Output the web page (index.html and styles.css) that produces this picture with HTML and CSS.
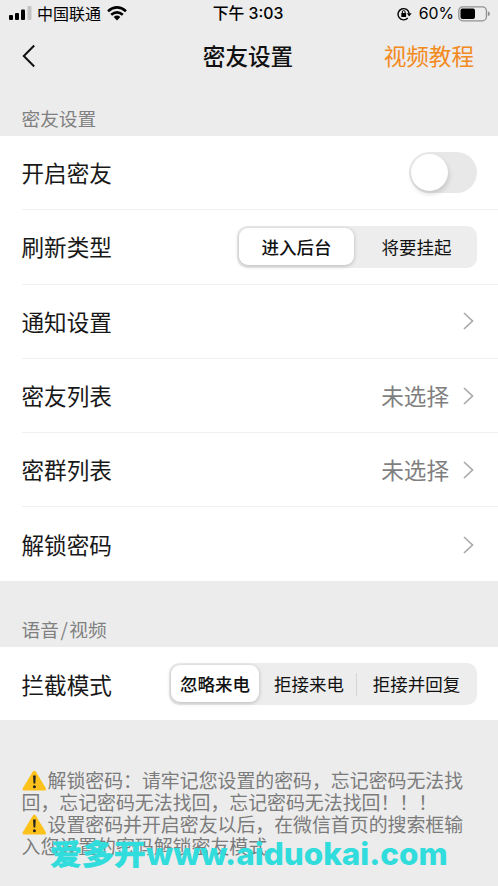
FILE: index.html
```html
<!DOCTYPE html>
<html lang="zh-CN">
<head>
<meta charset="utf-8">
<title>密友设置</title>
<link rel="stylesheet" href="styles.css">
</head>
<body>
<header class="status">
  <div class="status-left">
    <svg class="signal" width="24" height="14" viewBox="0 0 24 14"><rect x="0" y="9" width="4" height="5" rx="1"/><rect x="6" y="7" width="4" height="7" rx="1"/><rect x="12" y="3.500" width="4" height="10.500" rx="1"/><rect x="18.500" y="0" width="4" height="14" rx="1" fill="#c3c3c3"/></svg>
    <span class="carrier">中国联通</span>
    <svg class="wifi" width="20" height="15" viewBox="0 0 20 15"><g fill="none" stroke="#000" stroke-width="2.600"><path d="M1 5.200Q10-2.400 19 5.200"/><path d="M4.200 8.800Q10 3.800 15.800 8.800"/></g><path d="M6.700 11Q10 8.200 13.300 11L10 14.600Z"/></svg>
  </div>
  <div class="clock">下午 3:03</div>
  <div class="status-right">
    <svg width="15" height="14" viewBox="0 0 15 14"><g fill="none" stroke="#000" stroke-width="1.400"><path d="M10.800 11A5.600 5.600 0 1 1 12.200 6.500"/><path d="M5.300 6.500V5Q5.300 3.600 6.700 3.600Q8.100 3.600 8.100 5V6.500" stroke-width="1"/></g><rect x="4.300" y="6" width="4.800" height="4" rx=".6"/><path d="M9.800 6.200h4.800l-2.400 3.200z"/></svg>
    <span class="percent">60%</span>
    <svg width="33" height="16" viewBox="0 0 33 16"><rect x=".8" y=".8" width="27.600" height="14" rx="4" fill="none" stroke="#929292" stroke-width="1.300"/><rect x="2.500" y="2.600" width="14.500" height="10.400" rx="2"/><path d="M29.800 5.200Q32 6 32 7.800T29.800 10.400Z" fill="#929292"/></svg>
  </div>
</header>
<nav class="nav">
  <svg width="14" height="24" viewBox="0 0 14 24"><path d="M12.200 1.500L1.800 12L12.200 22.500" fill="none" stroke="#111" stroke-width="2"/></svg>
  <h1>密友设置</h1>
  <a class="tutorial">视频教程</a>
</nav>
<main>
  <h2 class="section-title">密友设置</h2>
  <section class="list">
    <div class="row"><span>开启密友</span><div class="toggle"><i></i></div></div>
    <div class="row"><span>刷新类型</span><div class="segments two"><b>进入后台</b><em>将要挂起</em></div></div>
    <div class="row"><span>通知设置</span><svg class="chevron" viewBox="0 0 11 18"><path d="M1 1L9.500 9L1 17"/></svg></div>
    <div class="row"><span>密友列表</span><span class="value">未选择</span><svg class="chevron" viewBox="0 0 11 18"><path d="M1 1L9.500 9L1 17"/></svg></div>
    <div class="row"><span>密群列表</span><span class="value">未选择</span><svg class="chevron" viewBox="0 0 11 18"><path d="M1 1L9.500 9L1 17"/></svg></div>
    <div class="row"><span>解锁密码</span><svg class="chevron" viewBox="0 0 11 18"><path d="M1 1L9.500 9L1 17"/></svg></div>
  </section>
  <h2 class="section-title second">语音<span class="slash">/</span>视频</h2>
  <section class="list call">
    <div class="row"><span>拦截模式</span><div class="segments three"><b>忽略来电</b><em>拒接来电</em><em class="divided">拒接并回复</em></div></div>
  </section>
  <div class="notes">
    <p><svg class="warn" viewBox="0 0 25 21"><path d="M10.700 1.700Q12.300-.4 13.900 1.700L23.700 18Q24.600 20.300 22.400 20.500H2.200Q0 20.300.9 18Z" fill="#fcc21b"/><path d="M11 5.500h2.800l-.5 8h-1.800z" fill="#222"/><circle cx="12.400" cy="16.700" r="1.500" fill="#222"/></svg>解锁密码：请牢记您设置的密码，忘记密码无法找<br>回，忘记密码无法找回，忘记密码无法找回！！！</p>
    <p><svg class="warn" viewBox="0 0 25 21"><path d="M10.700 1.700Q12.300-.4 13.900 1.700L23.700 18Q24.600 20.300 22.400 20.500H2.200Q0 20.300.9 18Z" fill="#fcc21b"/><path d="M11 5.500h2.800l-.5 8h-1.800z" fill="#222"/><circle cx="12.400" cy="16.700" r="1.500" fill="#222"/></svg>设置密码并开启密友以后，在微信首页的搜索框输<br>入您设置的密码解锁密友模式</p>
    <div class="watermark"><span class="mark-cn">爱多开</span><span class="mark-url">www.aiduokai.com</span></div>
  </div>
</main>
</body>
</html>
```
FILE: styles.css
```css
* { box-sizing: border-box; }
body {
  margin: 0;
  height: 886px;
  overflow: hidden;
  background: #ececec;
  color: #181818;
  font-family: "Noto Sans CJK SC", sans-serif;
}
h1, h2, p { margin: 0; font-weight: 400; }
b, em, i { font-style: normal; }
svg { display: block; flex: none; }

.status {
  display: grid;
  grid-template-columns: 1fr auto 1fr;
  align-items: center;
  height: 27px;
  padding: 0 7px 0 9px;
  color: #000;
  font-size: 16px;
  line-height: 26px;
}
.status-left, .status-right { display: flex; align-items: center; }
.status-right { justify-content: flex-end; font-family: Inter, sans-serif; }
.signal { margin-top: -1px; }
.carrier { margin: -1px 6px 0 4px; }
.clock {
  margin: 1px 4px 0 0;
  font-family: Inter, "Noto Sans CJK SC", sans-serif;
  font-size: 15.800px;
  font-weight: 500;
}
.percent { margin: 1px 4px 0 7px; font-size: 15.800px; }

.nav {
  display: grid;
  grid-template-columns: 1fr auto 1fr;
  align-items: center;
  height: 57px;
  padding: 0 24px 0 22px;
}
.nav h1 { font-size: 22.600px; font-weight: 500; color: #111; }
.tutorial { justify-self: end; color: #f38a20; font-size: 22.600px; }

.section-title {
  height: 52px;
  padding: 20px 22px 0 21.500px;
  color: #808080;
  font-size: 18.700px;
  line-height: 28px;
}
.section-title.second { height: 66px; padding-top: 34px; }
.slash { padding: 0 1.500px; }

.list { height: 445px; background: #fff; padding-left: 21.500px; }
.row {
  display: flex;
  align-items: center;
  height: 74.300px;
  padding-right: 21px;
  border-bottom: 1px solid #f0f0f0;
  font-size: 22.600px;
}
.row:last-child { border-bottom: 0; }
.call { height: 73px; }
.call .row { height: 74px; }
.row > :nth-child(2) { margin-left: auto; }
.value { color: #7f7f7f; }
.chevron { width: 11px; height: 18px; margin: 0 3px 0 14px; }
.chevron path { fill: none; stroke: #aaa; stroke-width: 1.700; }

.toggle {
  width: 68px;
  height: 41px;
  padding: 2px;
  border-radius: 21px;
  background: #e8e8e8;
}
.toggle i {
  display: block;
  width: 37px;
  height: 37px;
  border-radius: 50%;
  background: #fff;
  box-shadow: 1px 3px 5px rgba(0, 0, 0, .15);
}

.segments {
  display: grid;
  height: 42px;
  padding: 2px;
  border-radius: 10px;
  background: #ededed;
  color: #111;
  font-size: 17.500px;
  line-height: 38px;
  text-align: center;
}
.two { width: 240px; grid-template-columns: 115px 1fr; }
.three { width: 308px; grid-template-columns: 88px 1fr 119px; }
.segments b {
  height: 37px;
  border-radius: 9px;
  background: #fff;
  font-weight: 500;
  box-shadow: 0 1px 4px rgba(0, 0, 0, .23);
}
.segments em { padding-left: 4px; }
.three em { padding-left: 3px; }
.three .divided {
  padding-left: 2px;
  background: linear-gradient(#d5d5d5, #d5d5d5) 0 center / 1px 23px no-repeat;
}

.notes {
  position: relative;
  padding: 48.500px 22px 0 21.500px;
  color: #7b7b7b;
  font-size: 18.900px;
  line-height: 22.300px;
  white-space: nowrap;
}
.notes p { height: 44.600px; }
.warn { display: inline-block; width: 25px; height: 21px; margin: -3px 1px -3px 0; vertical-align: 0; }
.watermark {
  position: absolute;
  top: 118px;
  left: 50px;
  display: flex;
  align-items: center;
  height: 32px;
  color: #30dcdc;
  font-weight: 800;
}
.mark-cn {
  width: 96px;
  margin-top: -3px;
  font-size: 28px;
  line-height: 32px;
  transform: scaleX(1.140);
  transform-origin: left;
  -webkit-text-stroke: .5px #30dcdc;
}
.mark-url {
  font-family: Inter, sans-serif;
  font-size: 31px;
  line-height: 32px;
  transform: scaleX(1.015);
  transform-origin: left;
}
```
